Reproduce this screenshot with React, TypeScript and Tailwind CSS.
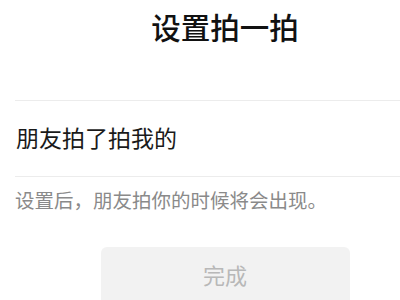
import React from "react";

export default function App() {
  const font = { fontFamily: '"Noto Sans CJK SC", "Noto Sans", sans-serif' };
  return (
    <div className="w-[400px] h-[300px] overflow-hidden bg-white" style={font}>
      <div className="w-[450px] flex flex-col">
        <div className="h-[100px] flex justify-center pt-[6px]">
          <span className="text-[29.5px] leading-[40px] font-medium text-[#111]">设置拍一拍</span>
        </div>
        <div className="ml-[15px] border-t border-[#ececec]" />
        <div className="h-[75px] flex items-center pl-[16px] pb-[3px]">
          <span className="text-[23px] leading-[30px] text-[#1a1a1a]">朋友拍了拍我的</span>
        </div>
        <div className="ml-[15px] border-t border-[#ececec]" />
        <div className="pl-[15px] pt-[9px]">
          <span className="text-[19.5px] leading-[28px] text-[#8a8a8a]">设置后，朋友拍你的时候将会出现。</span>
        </div>
        <div className="flex justify-center pt-[33px]">
          <div className="w-[249px] h-[60px] rounded-[6px] bg-[#f2f2f2] flex justify-center pt-[12px]">
            <span className="text-[22px] leading-[30px] text-[#b8b8b8]">完成</span>
          </div>
        </div>
      </div>
    </div>
  );
}
